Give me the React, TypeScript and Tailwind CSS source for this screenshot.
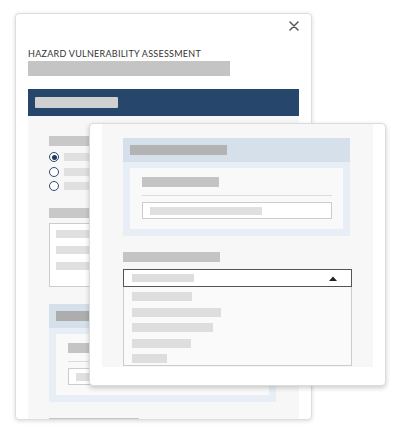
import React from "react";

function BlueBox({ headBar }: { headBar: string }) {
  return (
    <div className="w-[227px] h-[98px] shrink-0 flex flex-col">
      <div className="h-[24px] bg-[#d6e0eb] pl-[7px] pt-[7px]">
        <div className={`h-[10px] w-[97px] ${headBar}`} />
      </div>
      <div className="flex-1 bg-[#e8eef5] px-[7px] pt-[6px] pb-[7px] flex">
        <div className="flex-1 bg-[#f9f9f9] pl-[12px] pr-[11px] pt-[9px] flex flex-col">
          <div className="h-[10px] w-[77px] bg-[#c4c4c4]" />
          <div className="mt-[8px] h-px bg-[#dddddd]" />
          <div className="mt-[6px] h-[17px] border border-[#cccccc] bg-white pl-[7px] pt-[4px]">
            <div className="h-[8px] w-[112px] bg-[#e0e0e0]" />
          </div>
        </div>
      </div>
    </div>
  );
}

function Radio({ checked }: { checked?: boolean }) {
  return (
    <div className="flex items-center h-[10px] gap-[5px]">
      <div className="w-[10px] h-[10px] rounded-full border border-[#2b4b6f] bg-white flex items-center justify-center">
        {checked && <div className="w-[5px] h-[5px] rounded-full bg-[#1f3c5e]" />}
      </div>
      <div className="h-[8px] w-[90px] bg-[#e0e0e0]" />
    </div>
  );
}

export default function App() {
  return (
    <div className="relative w-[400px] h-[432px] bg-white overflow-hidden" style={{ fontFamily: "Lato, 'Liberation Sans', sans-serif" }}>
      {/* Back card */}
      <div className="ml-[15px] mt-[13px] w-[297px] h-[407px] border border-[#dedede] rounded-[4px] shadow-[0_1px_4px_rgba(0,0,0,0.15)] bg-white overflow-hidden flex flex-col px-[12px]">
        <div className="h-[34px] shrink-0 flex justify-end items-start pt-[7px]">
          <svg width="10" height="10" viewBox="0 0 10 10">
            <path d="M1 1 L9 9 M9 1 L1 9" stroke="#555" strokeWidth="1.5" strokeLinecap="round" />
          </svg>
        </div>
        <div className="h-[12px] leading-[12px] text-[9px] tracking-[0.03em] text-[#333] uppercase whitespace-nowrap">
          Hazard Vulnerability Assessment
        </div>
        <div className="mt-[1px] h-[15px] w-[202px] shrink-0 bg-[#c4c4c4]" />
        <div className="mt-[13px] h-[27px] shrink-0 bg-[#26476b] pl-[7px] pt-[8px]">
          <div className="h-[11px] w-[83px] bg-[#d0d0d0] rounded-[1px]" />
        </div>
        <div className="flex-1 bg-[#f7f7f7] px-[21px] pt-[20px] flex flex-col">
          <div className="h-[10px] w-[110px] shrink-0 bg-[#c8c8c8]" />
          <div className="mt-[6px] flex flex-col gap-[4.5px]">
            <Radio checked />
            <Radio />
            <Radio />
          </div>
          <div className="mt-[17px] h-[10px] w-[110px] shrink-0 bg-[#c8c8c8]" />
          <div className="mt-[5px] h-[64px] w-[227px] shrink-0 border border-[#cccccc] bg-white pl-[6px] pt-[6px] flex flex-col gap-[8px]">
            <div className="h-[8px] w-[120px] bg-[#e0e0e0]" />
            <div className="h-[8px] w-[120px] bg-[#e0e0e0]" />
            <div className="h-[8px] w-[120px] bg-[#e0e0e0]" />
          </div>
          <div className="mt-[17px]">
            <BlueBox headBar="bg-[#adadad]" />
          </div>
          <div className="mt-[16px] h-[10px] w-[90px] shrink-0 bg-[#c4c4c4]" />
        </div>
      </div>

      {/* Front card */}
      <div className="absolute left-[89px] top-[123px] w-[297px] h-[263px] border border-[#dcdcdc] rounded-[4px] shadow-[0_2px_5px_rgba(0,0,0,0.2)] bg-white px-[12px] pb-[18px] flex flex-col">
        <div className="flex-1 bg-[#f7f7f7] px-[21px] pt-[14px] overflow-hidden flex flex-col">
          <BlueBox headBar="bg-[#b3b3b3]" />
          <div className="mt-[16px] h-[10px] w-[97px] shrink-0 bg-[#c4c4c4]" />
          <div className="mt-[7px] h-[18px] shrink-0 border border-[#555] bg-white pl-[8px] pr-[14px] flex items-center justify-between">
            <div className="h-[8px] w-[62px] bg-[#dddddd]" />
            <svg width="8" height="5" viewBox="0 0 8 5">
              <path d="M0 5 L4 0.5 L8 5 Z" fill="#222" />
            </svg>
          </div>
          <div className="h-[79px] shrink-0 border-x border-b border-[#cccccc] bg-[#fafafa] pl-[8px] pt-[5px] flex flex-col gap-[6.5px]">
            <div className="h-[9px] w-[60px] bg-[#dedede]" />
            <div className="h-[9px] w-[89px] bg-[#dedede]" />
            <div className="h-[9px] w-[81px] bg-[#dedede]" />
            <div className="h-[9px] w-[59px] bg-[#dedede]" />
            <div className="h-[9px] w-[35px] bg-[#dedede]" />
          </div>
        </div>
      </div>
    </div>
  );
}
